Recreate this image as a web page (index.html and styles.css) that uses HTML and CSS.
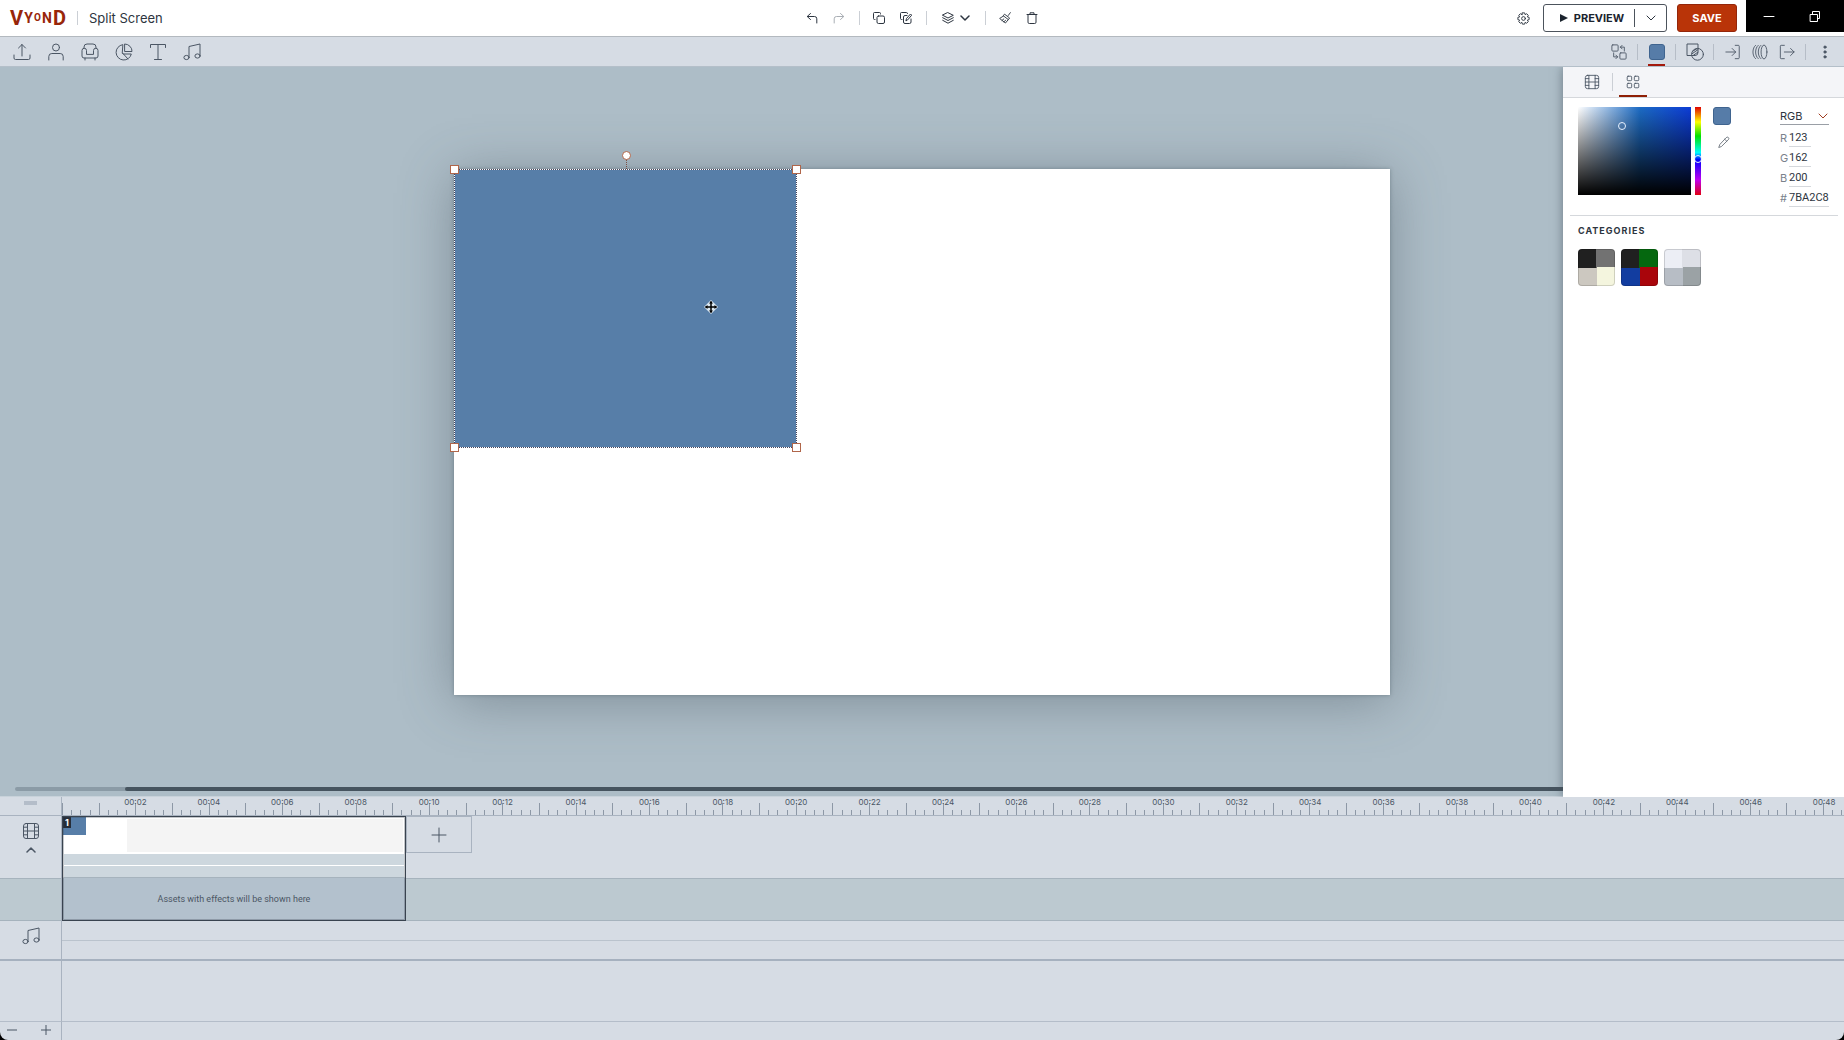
FILE: index.html
```html
<!DOCTYPE html>
<html lang="en">
<head>
    <meta charset="UTF-8">
    <meta name="viewport" content="width=device-width, initial-scale=1.0">
    <title>Split Screen</title>
    <link rel="stylesheet" href="styles.css">
</head>
<body>
    <svg class="defs" aria-hidden="true">
        <symbol id="film" viewBox="0 0 18 18"><rect x="1.5" y="1.5" width="15" height="15" rx="2.5"/><path d="M5.5 1.5v15M12.5 1.5v15M1.5 9h15M1.5 5.2h4M1.5 12.8h4M12.5 5.2h4M12.5 12.8h4"/></symbol>
        <symbol id="music" viewBox="0 0 18 18"><path d="M6 14V3.5L17 1v11.5"/><ellipse cx="3.5" cy="14.5" rx="2.6" ry="2.1"/><ellipse cx="14.5" cy="13" rx="2.6" ry="2.1"/></symbol>
        <symbol id="down" viewBox="0 0 10 10"><path d="M1 3l4 4 4-4"/></symbol>
    </svg>
    <div class="app">
        <header class="header">
            <div class="brand">
                <a class="logo" href="#"><span class="big">V</span><span class="mid">Y</span><span class="small">O</span><span class="mid">N</span><span class="big">D</span></a>
                <span class="divider"></span>
                <h1>Split Screen</h1>
            </div>
            <div class="actions">
                <button class="icon" aria-label="Undo"><svg viewBox="0 0 12 12"><path d="M4.5 1.5L1.2 4.5l3.3 3M1.5 4.5h7a2.3 2.3 0 0 1 2.3 2.3V11"/></svg></button>
                <button class="icon faded" aria-label="Redo"><svg viewBox="0 0 12 12"><path d="M7.5 1.5l3.3 3-3.3 3M10.5 4.5h-7a2.3 2.3 0 0 0-2.3 2.3V11"/></svg></button>
                <span class="divider"></span>
                <button class="icon" aria-label="Copy"><svg viewBox="0 0 12 12"><path d="M2 7.5H1.500a1 1 0 0 1-1-1v-5a1 1 0 0 1 1-1h5a1 1 0 0 1 1 1V2"/><rect x="4" y="4" width="7.500" height="7.500" rx="1.500"/></svg></button>
                <button class="icon" aria-label="Edit copy"><svg viewBox="0 0 12 12"><path d="M2 7.500H1.500a1 1 0 0 1-1-1v-5a1 1 0 0 1 1-1h5a1 1 0 0 1 1 1M7 3.500H5A1.500 1.500 0 0 0 3.500 5v5A1.500 1.500 0 0 0 5 11.500h4.500A1.500 1.500 0 0 0 11 10V7M6 8.500l.5-2L10.500 2l1.200 1.200-4 4.600z"/></svg></button>
                <span class="divider"></span>
                <button class="icon layers" aria-label="Layers"><svg viewBox="0 0 12 12"><path d="M6 .7l5.300 2.600L6 6 .7 3.300zM.7 5.700L6 8.500l5.300-2.800M.7 8.300L6 11.200l5.300-2.900"/></svg><svg class="chevron"><use href="#down"/></svg></button>
                <span class="divider"></span>
                <button class="icon" aria-label="Clear"><svg viewBox="0 0 13 13"><path d="M12.300.7L10 3.800M6.300 2.600l5.200 3.900-1.400 1.700-5.200-3.900zM4.900 4.300L.7 7l2.600 2.100L7 11.900l3.100-3.700M3.300 9.100l1.900-1.600M5.300 10.600l1.900-1.700"/></svg></button>
                <button class="icon" aria-label="Delete"><svg viewBox="0 0 12 12"><path d="M1 2.500h10M4 2.500V.8h4v1.700M2 2.500v7.700a1.300 1.300 0 0 0 1.300 1.300h5.400A1.300 1.300 0 0 0 10 10.200V2.500"/></svg></button>
            </div>
            <div class="header-end">
                <button class="icon" aria-label="Settings"><svg class="gear" viewBox="0 0 16 16"><path d="M6.800 1h2.400l.5 1.900 1.700-1 1.700 1.700-1 1.700 1.900.5v2.400l-1.900.5 1 1.700-1.700 1.700-1.700-1-.5 1.900H6.800l-.5-1.900-1.700 1-1.700-1.700 1-1.700L2 8.200V5.800l1.900-.5-1-1.700 1.700-1.700 1.700 1z" transform="translate(0 1)"/><circle cx="8" cy="8" r="2"/></svg></button>
                <div class="preview">
                    <button class="preview-play"><svg viewBox="0 0 8 8"><path d="M0 0l8 4-8 4z"/></svg>PREVIEW</button>
                    <button class="preview-more" aria-label="Preview options"><svg class="chevron"><use href="#down"/></svg></button>
                </div>
                <button class="save">SAVE</button>
                <div class="window-controls">
                    <button aria-label="Minimize"><svg viewBox="0 0 12 12"><path d="M1 6.500h10"/></svg></button>
                    <button aria-label="Restore"><svg viewBox="0 0 12 12"><path d="M1.500 4.500h7v7h-7zM3.500 4.500v-3h7v7h-2"/></svg></button>
                </div>
            </div>
        </header>

        <nav class="toolbar">
            <div class="assets">
                <button aria-label="Upload"><svg viewBox="0 0 18 18"><path d="M9 13V1.500M5.500 5L9 1.500 12.500 5M1 12v3a1.500 1.500 0 0 0 1.500 1.500h13A1.500 1.500 0 0 0 17 15v-3"/></svg></button>
                <button aria-label="Character"><svg viewBox="0 0 18 18"><circle cx="9" cy="4.500" r="3.500"/><path d="M1.800 17v-3.500a3 3 0 0 1 3-3h8.400a3 3 0 0 1 3 3V17"/></svg></button>
                <button aria-label="Prop"><svg viewBox="0 0 18 18"><path d="M3 5.500V4a3 3 0 0 1 3-3h6a3 3 0 0 1 3 3v1.500M5.500 11V7.500a2 2 0 0 0-4.500 0V13a2 2 0 0 0 2 2h12a2 2 0 0 0 2-2V7.500a2 2 0 0 0-4.500 0V11zM4 15v2M14 15v2"/></svg></button>
                <button aria-label="Chart"><svg viewBox="0 0 18 18"><path d="M7.500 1.700a7.700 7.700 0 1 0 8.800 9.300H8l-.5-.5z"/><path d="M10 1a7.200 7.200 0 0 1 7 7.500h-7zM8 10.500l5 5.500"/></svg></button>
                <button aria-label="Text"><svg viewBox="0 0 18 18"><path d="M1.500 4.500V1.500h15v3M9 1.500v15M5.500 16.500h7"/></svg></button>
                <button aria-label="Audio"><svg><use href="#music"/></svg></button>
            </div>
            <div class="tools">
                <button aria-label="Replace"><svg viewBox="0 0 18 18"><rect x="1" y="1" width="7" height="7" rx="1"/><rect x="10" y="10" width="7" height="7" rx="1"/><path d="M10.500 3.500H15V8M12.500 1.500l-2 2 2 2M7.500 14.500H3V10M5.500 12.500l2 2-2 2"/></svg></button>
                <span class="divider"></span>
                <button class="selected" aria-label="Colour"><span class="chip"></span></button>
                <span class="divider"></span>
                <button aria-label="Mask"><svg class="mask" viewBox="0 0 18 18"><path d="M5.500 12.500H1V1h11v4.500"/><circle cx="11.500" cy="11.300" r="5.900"/><path d="M5.800 12.500H9a3 3 0 0 0 3-3V5.600M7 8l3.500-2M6 10.800l5.800-4M7.500 12.200l4.300-3"/></svg></button>
                <span class="divider"></span>
                <button aria-label="Enter effect"><svg viewBox="0 0 18 18"><path d="M1 9h11M8 5l4 4-4 4M11.500 1.500H15a1 1 0 0 1 1 1v13a1 1 0 0 1-1 1h-3.500"/></svg></button>
                <button aria-label="Motion path"><svg viewBox="0 0 18 18"><path d="M4 1.500c-4 3-4 12 0 15M7 1.500c-4 3-4 12 0 15M10 1.500c-4 3-4 12 0 15"/><ellipse cx="13.500" cy="9" rx="3.300" ry="7.800"/></svg></button>
                <button aria-label="Exit effect"><svg viewBox="0 0 18 18"><path d="M6 9h11M13 5l4 4-4 4M6 1.500H2.500a1 1 0 0 0-1 1v13a1 1 0 0 0 1 1H6"/></svg></button>
                <span class="divider"></span>
                <button aria-label="More"><svg class="dots" viewBox="0 0 18 18"><circle cx="9" cy="3.500" r="1.300"/><circle cx="9" cy="9" r="1.300"/><circle cx="9" cy="14.500" r="1.300"/></svg></button>
            </div>
        </nav>

        <main class="workspace">
            <div class="stage">
                <div class="canvas">
                    <div class="shape">
                        <span class="stem"></span>
                        <span class="handle rotate"></span>
                        <span class="handle nw"></span>
                        <span class="handle ne"></span>
                        <span class="handle sw"></span>
                        <span class="handle se"></span>
                        <svg class="cursor" viewBox="0 0 14 14"><path class="halo" d="M7 0l7 7-7 7-7-7z"/><path d="M7 2v10M2 7h10"/><path class="tip" d="M7 1l2 2.500H5zM7 13l2-2.500H5zM1 7l2.500-2v4zM13 7l-2.500-2v4z"/></svg>
                    </div>
                </div>
            </div>
            <div class="scrollbar"><div class="thumb"></div></div>

            <aside class="panel">
                <div class="tabs">
                    <button aria-label="Scene"><svg><use href="#film"/></svg></button>
                    <span class="divider"></span>
                    <button class="selected" aria-label="Palette"><svg viewBox="0 0 18 18"><rect x="2.500" y="2.500" width="5" height="5" rx="1"/><rect x="10.500" y="2.500" width="5" height="5" rx="1"/><rect x="2.500" y="10.500" width="5" height="5" rx="1"/><rect x="10.500" y="10.500" width="5" height="5" rx="1"/></svg></button>
                </div>
                <section class="picker">
                    <div class="field"><span class="ring"></span></div>
                    <div class="hue"><span class="ring"></span></div>
                    <div class="current">
                        <span class="chip"></span>
                        <button aria-label="Pick colour"><svg viewBox="0 0 14 14"><path d="M1 13l1.200-3.200L9.500 2a1.800 1.800 0 0 1 2.600-.2 1.800 1.800 0 0 1-.1 2.600L4.300 12zM7.800 3.800l2.500 2.400"/></svg></button>
                    </div>
                    <div class="values">
                        <div class="mode">
                            <select aria-label="Colour mode"><option>RGB</option></select>
                            <svg class="chevron"><use href="#down"/></svg>
                        </div>
                        <div class="value"><label for="red">R</label><input id="red" class="short" value="123"></div>
                        <div class="value"><label for="green">G</label><input id="green" class="short" value="162"></div>
                        <div class="value"><label for="blue">B</label><input id="blue" class="short" value="200"></div>
                        <div class="value"><label for="hex">#</label><input id="hex" value="7BA2C8"></div>
                    </div>
                </section>
                <section class="categories">
                    <h2>CATEGORIES</h2>
                    <div class="palettes">
                        <button class="palette basic" aria-label="Basic"></button>
                        <button class="palette bright" aria-label="Bright"></button>
                        <button class="palette light" aria-label="Light"></button>
                    </div>
                </section>
            </aside>
        </main>

        <section class="timeline">
            <div class="side grip"><span></span></div>
            <div class="ruler">
                <div class="ticks" id="ticks"></div>
                <div class="times" id="times"></div>
            </div>
            <div class="side scene-side"><svg><use href="#film"/></svg><button aria-label="Collapse"><svg class="chevron up"><use href="#down"/></svg></button></div>
            <div class="side effects-side"></div>
            <div class="scene-row"></div>
            <div class="effects-row"></div>
            <div class="scenes">
                <div class="clip">
                    <div class="thumbs"><div class="thumbnail"><div class="thumb-shape"><span>1</span></div></div><div class="rest"></div></div>
                    <div class="bar"></div>
                    <div class="bar"></div>
                    <div class="note">Assets with effects will be shown here</div>
                </div>
                <button class="add" aria-label="Add scene"><svg viewBox="0 0 16 16"><path d="M8 1v14M1 8h14"/></svg></button>
            </div>
            <div class="side music-side"><svg><use href="#music"/></svg></div>
            <div class="music-row"><div></div></div>
            <div class="side"></div>
            <div></div>
            <div class="side zoom">
                <button aria-label="Zoom out"><svg viewBox="0 0 10 10"><path d="M0 5h10"/></svg></button>
                <button aria-label="Zoom in"><svg viewBox="0 0 10 10"><path d="M0 5h10M5 0v10"/></svg></button>
            </div>
            <div class="zoom-row"></div>
        </section>
    </div>
    <script src="script.js"></script>
</body>
</html>
```
FILE: styles.css
```css
* {
    box-sizing: border-box;
}
body {
    margin: 0;
    background-color: black;
    color: #2d3540;
    font-family: Inter, "Liberation Sans", sans-serif;
}
button {
    display: flex;
    justify-content: center;
    align-items: center;
    padding: 0;
    border: none;
    background: none;
    color: inherit;
    font-family: inherit;
    cursor: pointer;
}
svg {
    width: 18px;
    height: 18px;
    fill: none;
    stroke: currentColor;
    stroke-width: 1;
    stroke-linecap: round;
    stroke-linejoin: round;
}
.defs {
    position: absolute;
    width: 0;
    height: 0;
}
.app {
    display: flex;
    flex-direction: column;
    height: 100vh;
    background-color: #d6dce4;
    border-radius: 0 0 8px 8px;
    overflow: hidden;
}
.divider {
    width: 1px;
    height: 14px;
    background-color: #cbcfd5;
}
.chevron {
    width: 10px;
    height: 10px;
}

/* header */
.header {
    display: grid;
    grid-template-columns: 1fr auto 1fr;
    align-items: center;
    height: 37px;
    background-color: white;
    border-bottom: 1px solid #b3b9bf;
}
.brand {
    display: flex;
    align-items: center;
    gap: 11px;
    padding-left: 10px;
}
.logo {
    display: flex;
    justify-content: space-between;
    align-items: center;
    width: 56px;
    height: 22px;
    color: #98260a;
    font-family: Roboto, "Liberation Sans", sans-serif;
    font-weight: bold;
    line-height: 22px;
    text-decoration: none;
}
.logo .big {
    font-size: 20px;
}
.logo .mid {
    font-size: 14px;
}
.logo .small {
    font-size: 10px;
}
h1 {
    margin: 0;
    font-size: 13px;
    font-weight: normal;
}
.actions {
    display: flex;
    align-items: center;
}
.actions .divider {
    margin: 0 6px;
}
.icon {
    width: 27px;
    height: 28px;
}
.icon svg {
    width: 12px;
    height: 12px;
}
.icon .gear {
    width: 15px;
    height: 15px;
}
.faded {
    color: #a9aeb4;
}
.layers {
    width: 46px;
    gap: 6px;
}
.layers .chevron {
    width: 10px;
    height: 10px;
    stroke-width: 1.5;
}
.header-end {
    display: flex;
    justify-content: flex-end;
    align-self: start;
}
.header-end .icon {
    height: 36px;
    margin-right: 6px;
}
.preview {
    display: flex;
    align-items: center;
    width: 124px;
    height: 28px;
    margin: 4px 10px 0 0;
    border: 1px solid #4c535c;
    border-radius: 3px;
}
.preview-play {
    flex: 1;
    height: 18px;
    gap: 6px;
    padding-left: 6px;
    border-right: 1px solid #4c535c;
    color: #1b242e;
    font-size: 11px;
    font-weight: bold;
}
.preview-play svg {
    width: 8px;
    height: 8px;
    fill: currentColor;
    stroke: none;
}
.preview-more {
    width: 31px;
    height: 26px;
}
.save {
    width: 60px;
    height: 28px;
    margin: 4px 9px 0 0;
    border: 1px solid #94260a;
    border-radius: 3px;
    background-color: #b93408;
    color: white;
    font-size: 11px;
    font-weight: bold;
}
.window-controls {
    display: flex;
    width: 98px;
    height: 32px;
    background-color: black;
    color: white;
}
.window-controls button {
    width: 46px;
}
.window-controls svg {
    width: 12px;
    height: 12px;
}

/* toolbar */
.toolbar {
    display: flex;
    justify-content: space-between;
    height: 30px;
    padding: 0 6px 0 5px;
    border-bottom: 1px solid #b4bfc9;
    color: #4b5664;
}
.assets, .tools {
    display: flex;
    align-items: center;
}
.assets button {
    width: 34px;
    height: 29px;
}
.tools button {
    width: 27px;
    height: 29px;
}
.tools svg {
    width: 16px;
    height: 16px;
}
.tools .mask {
    width: 18px;
    height: 18px;
}
.tools .dots {
    fill: currentColor;
}
.tools .divider {
    height: 16px;
    margin: 0 5px;
    background-color: #b6bdc7;
}
.tools .selected {
    position: relative;
}
.tools .selected::after {
    content: "";
    position: absolute;
    right: 5px;
    bottom: 0;
    left: 5px;
    height: 2px;
    background-color: #a3190c;
}
.chip {
    width: 16px;
    height: 16px;
    border: 1px solid #3f648f;
    border-radius: 3px;
    background-color: #567ca8;
}

/* workspace */
.workspace {
    display: grid;
    grid-template-rows: 1fr;
    flex: 1;
    min-height: 0;
    background-color: #adbdc7;
}
.stage, .panel, .scrollbar {
    grid-area: 1 / 1;
}
.stage {
    display: flex;
    justify-content: center;
    align-items: center;
}
.canvas {
    width: 50.8%;
    aspect-ratio: 16 / 9;
    background-color: white;
    box-shadow: 0 0 4px rgba(60, 75, 85, 0.4), 0 6px 50px rgba(70, 85, 95, 0.45);
}
.shape {
    position: relative;
    width: 36.7%;
    height: 53%;
    border: 1px dotted white;
    background: linear-gradient(#577ea8, #577ea8) padding-box, #46455c border-box;
}
.handle {
    position: absolute;
    width: 9px;
    height: 9px;
    border: 1px solid #b0664a;
    background-color: white;
}
.nw, .ne {
    top: -5px;
}
.sw, .se {
    bottom: -5px;
}
.nw, .sw {
    left: -5px;
}
.ne, .se {
    right: -5px;
}
.rotate {
    top: -19px;
    left: calc(50% - 4px);
    border-radius: 50%;
}
.stem {
    position: absolute;
    top: -11px;
    left: 50%;
    height: 10px;
    border-left: 1px dotted #7b5145;
}
.cursor {
    position: absolute;
    top: 47%;
    left: 73%;
    width: 14px;
    height: 14px;
    color: black;
    stroke-width: 1.5;
}
.cursor .halo {
    fill: #dbe8f2;
    stroke: none;
}
.cursor .tip {
    fill: black;
    stroke: none;
}
.scrollbar {
    align-self: end;
    height: 4px;
    margin: 0 0 6px 15px;
    border-radius: 2px;
    background-color: #8b9ba6;
}
.thumb {
    height: 4px;
    margin-left: 6%;
    border-radius: 2px;
    background-color: #46545f;
}

/* colour panel */
.panel {
    justify-self: end;
    width: 281px;
    background-color: white;
    box-shadow: 0 0 10px rgba(60, 75, 85, 0.6);
    clip-path: inset(0 0 0 -20px);
    z-index: 1;
}
.tabs {
    display: flex;
    align-items: center;
    height: 31px;
    padding-left: 15px;
    border-bottom: 1px solid #d5d8dc;
    background-color: #f4f5f8;
    color: #4b5664;
}
.tabs svg {
    width: 16px;
    height: 16px;
}
.tabs button {
    width: 28px;
    height: 30px;
    border-top: 2px solid transparent;
    border-bottom: 2px solid transparent;
}
.tabs .selected {
    border-bottom-color: #8f2006;
}
.tabs .divider {
    height: 18px;
    margin: 0 6px;
}
.picker {
    display: flex;
    margin: 0 6px 0 7px;
    padding: 9px 9px 8px 8px;
    border-bottom: 1px solid #d5d8dc;
}
.field {
    position: relative;
    width: 113px;
    height: 88px;
    background: linear-gradient(to top, black, transparent), linear-gradient(to right, white, #1c6bc4 55%, #0d3cd6);
}
.hue {
    position: relative;
    width: 6px;
    height: 88px;
    margin: 0 12px 0 4px;
    background: linear-gradient(to bottom, #e00000, yellow 17%, #00e000 33%, cyan 52%, blue 60%, #c000f0 83%, #e00010);
}
.ring {
    position: absolute;
    width: 8px;
    height: 8px;
    border: 1px solid #e8f2ff;
    border-radius: 50%;
}
.field .ring {
    top: 17%;
    left: 35%;
}
.hue .ring {
    top: 54%;
    left: -1px;
}
.current {
    display: flex;
    flex-direction: column;
    gap: 10px;
}
.current .chip {
    width: 18px;
    height: 18px;
}
.current button {
    align-self: flex-end;
    width: 14px;
    height: 14px;
    color: #626a74;
}
.current button svg {
    width: 12px;
    height: 12px;
}
.values {
    width: 49px;
    margin-left: auto;
    font-size: 11px;
}
.mode {
    display: grid;
    align-items: center;
    height: 18px;
    margin-bottom: 4px;
    border-bottom: 1px solid #9a9fa6;
}
.mode select, .mode .chevron {
    grid-area: 1 / 1;
}
.mode select {
    width: 100%;
    padding: 0;
    border: none;
    background: none;
    color: inherit;
    font-family: inherit;
    font-size: 11px;
    appearance: none;
}
.mode .chevron {
    justify-self: end;
    margin-right: 1px;
    color: #a03c20;
    pointer-events: none;
}
.value {
    display: flex;
    align-items: center;
    height: 18px;
    margin-bottom: 2px;
}
.value:last-child {
    margin-bottom: 0;
}
.value label {
    width: 9px;
    color: #7a828c;
}
.value input {
    width: 40px;
    height: 17px;
    padding: 0;
    border: none;
    border-bottom: 1px solid #d5d8dc;
    background: none;
    color: inherit;
    font-family: Roboto, "Liberation Sans", sans-serif;
    font-size: 11px;
}
.value .short {
    width: 22px;
}
.categories {
    padding: 9px 15px;
}
h2 {
    margin: 0 0 12px;
    font-size: 9px;
    font-weight: bold;
    line-height: 12px;
    letter-spacing: 1px;
}
.palettes {
    display: flex;
    gap: 6px;
}
.palette {
    width: 37px;
    height: 37px;
    border-radius: 4px;
    box-shadow: inset 0 0 0 1px rgba(0, 0, 0, 0.15);
}
.basic {
    background: conic-gradient(#727272 25%, #f4f5de 25% 50%, #ccc8c0 50% 75%, #202020 75%);
}
.bright {
    background: conic-gradient(#05680f 25%, #a9050b 25% 50%, #123da0 50% 75%, #202020 75%);
}
.light {
    background: conic-gradient(#dddfe6 25%, #9ba2a5 25% 50%, #b7bdc5 50% 75%, #eceef5 75%);
}

/* timeline */
.timeline {
    display: grid;
    grid-template-columns: 62px 1fr;
    grid-template-rows: 19px 62px 43px 40px 60px 19px;
    color: #4b5664;
    box-shadow: 0 -1px 0 #c8d2da;
}
.side {
    display: flex;
    flex-direction: column;
    align-items: center;
    border-right: 1px solid #a9b3c0;
}
.grip {
    padding-top: 4px;
    border-bottom: 1px solid #a9b3c0;
}
.grip span {
    width: 13px;
    height: 4px;
    background-color: #b4bdc9;
}
.ruler {
    display: grid;
    grid-template-columns: 100%;
    grid-template-rows: 18px;
    border-bottom: 1px solid #a9b3c0;
    overflow: hidden;
}
.ticks, .times {
    grid-area: 1 / 1;
    display: flex;
}
.ticks {
    align-items: flex-end;
}
.tick {
    flex: 0 0 0.515%;
    height: 5px;
    border-left: 1px solid #8d98a6;
}
.tick:nth-child(4n + 1) {
    height: 12px;
}
.times {
    padding-left: 2.06%;
    font-size: 8px;
    line-height: 11px;
}
.times span {
    flex: 0 0 4.207%;
    text-align: center;
}
.scene-side {
    grid-area: 2 / 1;
    gap: 5px;
    padding-top: 6px;
}
.up {
    transform: rotate(180deg);
    stroke-width: 1.5;
}
.effects-side {
    grid-area: 3 / 1;
}
.scene-row {
    grid-area: 2 / 2;
}
.effects-row {
    grid-area: 3 / 2;
}
.effects-row, .effects-side {
    border-top: 1px solid #a6b3bd;
    border-bottom: 1px solid #a6b3bd;
    background-color: #bcc9d0;
}
.scenes {
    display: flex;
    align-items: flex-start;
    grid-area: 2 / 2 / 4 / 3;
    z-index: 1;
}
.clip {
    display: flex;
    flex-direction: column;
    width: 19.3%;
    height: 105px;
    border: 1px solid #39434f;
    outline: 1px solid rgba(57, 67, 79, 0.3);
    outline-offset: -2px;
}
.thumbs {
    display: flex;
    height: 37px;
    background-color: white;
}
.thumbnail {
    width: 62px;
}
.thumb-shape {
    width: 23px;
    height: 18px;
    background-color: #577ea8;
}
.thumb-shape span {
    display: block;
    width: 8px;
    height: 11px;
    background-color: #262d38;
    color: white;
    font-size: 9px;
    font-weight: bold;
    line-height: 11px;
    text-align: center;
}
.rest {
    flex: 1;
    margin: 2px;
    background-color: #f4f4f4;
}
.bar {
    height: 12px;
    border: 1px solid white;
    border-top: none;
    background-color: #cdd7de;
}
.bar + .bar {
    border-bottom-color: #a6b3bd;
}
.note {
    flex: 1;
    background-color: #b3c1cd;
    font-family: Roboto, "Liberation Sans", sans-serif;
    font-size: 9px;
    line-height: 42px;
    text-align: center;
}
.add {
    width: 66px;
    height: 37px;
    border: 1px solid #a9b3c0;
}
.add svg {
    width: 16px;
    height: 16px;
}
.music-side, .music-row {
    border-bottom: 2px solid #a6b1bf;
}
.music-side {
    padding-top: 6px;
}
.music-row div {
    height: 20px;
    border-bottom: 1px solid #bac3cd;
}
.zoom {
    flex-direction: row;
    justify-content: space-between;
    padding: 0 10px 2px 7px;
}
.zoom, .zoom-row {
    border-top: 1px solid #b4bdc9;
}
.zoom svg {
    display: block;
    width: 10px;
    height: 10px;
}
```
FILE: script.js
```js
const ticks = document.getElementById('ticks');
const times = document.getElementById('times');

// four ticks per second
for (let i = 0; i < 195; i++) {
    const tick = document.createElement('span');
    tick.className = 'tick';
    ticks.appendChild(tick);
}

// a label every two seconds
for (let s = 2; s <= 48; s += 2) {
    const time = document.createElement('span');
    time.textContent = '00:' + String(s).padStart(2, '0');
    times.appendChild(time);
}
```
